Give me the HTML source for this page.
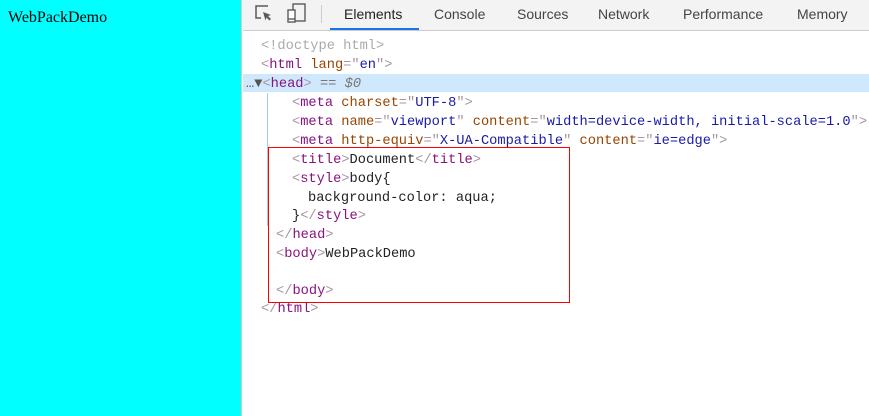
<!DOCTYPE html>
<html><head><style>
*{margin:0;padding:0;box-sizing:border-box}
body{width:869px;height:416px;position:relative;overflow:hidden;background:#fff}
#left{position:absolute;left:0;top:0;width:242px;height:416px;background:#0ff;border-right:1px solid #ccc}
#left span{position:absolute;left:8px;top:9px;font:16px "Liberation Serif",serif;color:#000}
#tb{position:absolute;left:243px;top:0;width:626px;height:31px;background:#f3f3f3;border-bottom:1px solid #ccc}
.tab{position:absolute;top:6px;font:14px "Liberation Sans",sans-serif;color:#444}
#ul{position:absolute;left:87px;top:28px;width:89px;height:2px;background:#1a73e8}
#sep{position:absolute;left:78px;top:5px;width:1px;height:18px;background:#ccc}
.ln{position:absolute;left:261px;font:13.7px "Liberation Mono",monospace;white-space:pre;height:19px;line-height:19px;color:#222}
.t{color:#881280}.a{color:#994500}.v{color:#1a1aa6}.g{color:#aaa}.b{color:#a894a6}
#hl{position:absolute;left:243px;top:74px;width:626px;height:18px;background:#cfe8fc}
#gl{position:absolute;left:267px;top:93px;width:1px;height:133px;background:#a8c7f0}
#box{position:absolute;left:268px;top:147px;width:302px;height:156px;border:1px solid #f00}
</style></head><body>
<div id="left"><span>WebPackDemo</span></div>
<div id="tb">
<svg style="position:absolute;left:12px;top:5px" width="18" height="18" viewBox="0 0 18 18"><path d="M13 1H1v12h5" fill="none" stroke="#5a5a5a" stroke-width="1.5"/><path d="M8 7l8 3-3 1 3 3-1.5 1.5-3-3-1 3z" fill="#5a5a5a"/></svg>
<svg style="position:absolute;left:44px;top:3px" width="20" height="20" viewBox="0 0 20 20"><rect x="6" y="1" width="12" height="17" fill="none" stroke="#5a5a5a" stroke-width="1.4"/><rect x="1" y="7" width="7" height="12" fill="#fff" stroke="#5a5a5a" stroke-width="1.4"/><line x1="1" y1="16" x2="8" y2="16" stroke="#5a5a5a" stroke-width="1.4"/></svg>
<div id="sep"></div>
<span class="tab" style="left:101px;color:#222">Elements</span>
<span class="tab" style="left:191px">Console</span>
<span class="tab" style="left:274px">Sources</span>
<span class="tab" style="left:355px">Network</span>
<span class="tab" style="left:440px">Performance</span>
<span class="tab" style="left:554px">Memory</span>
<div id="ul"></div>
</div>
<div id="hl"></div><div id="gl"></div>
<div class="ln g" style="top:37px">&lt;!doctype html&gt;</div>
<div class="ln" style="top:56px"><span class="b">&lt;</span><span class="t">html</span> <span class="a">lang</span><span class="b">="</span><span class="v">en</span><span class="b">"&gt;</span></div>
<div class="ln" style="top:75px;left:246px"><span style="color:#555">…▼</span><span class="b">&lt;</span><span class="t">head</span><span class="b">&gt;</span> <span style="color:#777">== <i>$0</i></span></div>
<div class="ln" style="top:94px;left:292px"><span class="b">&lt;</span><span class="t">meta</span> <span class="a">charset</span><span class="b">="</span><span class="v">UTF-8</span><span class="b">"&gt;</span></div>
<div class="ln" style="top:113px;left:292px"><span class="b">&lt;</span><span class="t">meta</span> <span class="a">name</span><span class="b">="</span><span class="v">viewport</span><span class="b">"</span> <span class="a">content</span><span class="b">="</span><span class="v">width=device-width, initial-scale=1.0</span><span class="b">"&gt;</span></div>
<div class="ln" style="top:132px;left:292px"><span class="b">&lt;</span><span class="t">meta</span> <span class="a">http-equiv</span><span class="b">="</span><span class="v">X-UA-Compatible</span><span class="b">"</span> <span class="a">content</span><span class="b">="</span><span class="v">ie=edge</span><span class="b">"&gt;</span></div>
<div class="ln" style="top:151px;left:292px"><span class="b">&lt;</span><span class="t">title</span><span class="b">&gt;</span>Document<span class="b">&lt;/</span><span class="t">title</span><span class="b">&gt;</span></div>
<div class="ln" style="top:170px;left:292px"><span class="b">&lt;</span><span class="t">style</span><span class="b">&gt;</span>body{</div>
<div class="ln" style="top:189px;left:308px">background-color: aqua;</div>
<div class="ln" style="top:207px;left:292px">}<span class="b">&lt;/</span><span class="t">style</span><span class="b">&gt;</span></div>
<div class="ln" style="top:226px;left:276px"><span class="b">&lt;/</span><span class="t">head</span><span class="b">&gt;</span></div>
<div class="ln" style="top:245px;left:276px"><span class="b">&lt;</span><span class="t">body</span><span class="b">&gt;</span>WebPackDemo</div>
<div class="ln" style="top:282px;left:276px"><span class="b">&lt;/</span><span class="t">body</span><span class="b">&gt;</span></div>
<div class="ln" style="top:300px"><span class="b">&lt;/</span><span class="t">html</span><span class="b">&gt;</span></div>
<div id="box"></div>
</body></html>
